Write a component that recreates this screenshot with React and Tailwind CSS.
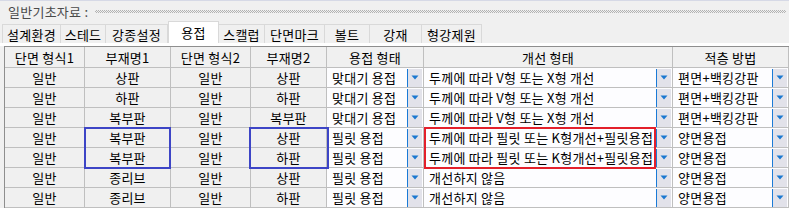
import React from 'react'

const tabs = [
  { label: '설계환경', w: 'w-[59px]' },
  { label: '스테드', w: 'w-[45px]' },
  { label: '강종설정', w: 'w-[62px]' },
  { label: '용접', w: 'w-[51px]', active: true },
  { label: '스캘럽', w: 'w-[46px]' },
  { label: '단면마크', w: 'w-[60px]' },
  { label: '볼트', w: 'w-[45px]' },
  { label: '강재', w: 'w-[52px]' },
  { label: '형강제원', w: 'w-[60px]' },
]

const headers = ['단면 형식1', '부재명1', '단면 형식2', '부재명2', '용접 형태', '개선 형태', '적층 방법']

const V_GROOVE = '두께에 따라 V형 또는 X형 개선'
const K_GROOVE = '두께에 따라 필릿 또는 K형개선+필릿용접'

const rows = [
  ['일반', '상판', '일반', '상판', '맞대기 용접', V_GROOVE, '편면+백킹강판'],
  ['일반', '하판', '일반', '하판', '맞대기 용접', V_GROOVE, '편면+백킹강판'],
  ['일반', '복부판', '일반', '복부판', '맞대기 용접', V_GROOVE, '편면+백킹강판'],
  ['일반', '복부판', '일반', '상판', '필릿 용접', K_GROOVE, '양면용접'],
  ['일반', '복부판', '일반', '하판', '필릿 용접', K_GROOVE, '양면용접'],
  ['일반', '종리브', '일반', '상판', '필릿 용접', '개선하지 않음', '양면용접'],
  ['일반', '종리브', '일반', '하판', '필릿 용접', '개선하지 않음', '양면용접'],
]

const DropButton = () => (
  <div className="w-[15px] h-[18px] mr-[1px] shrink-0 border-l border-[#1a7ad6] bg-[#e2e2ea] flex items-center justify-center">
    <svg width="8" height="5" viewBox="0 0 8 5">
      <path d="M0.5 0.5h7L4 4.5z" fill="#1b78d0" />
    </svg>
  </div>
)

const TextCell = ({ children }) => (
  <div className="h-[20px] border-r border-b border-[#bfbfbf] flex items-center justify-center bg-[#f0f0f0]">
    {children}
  </div>
)

const ComboCell = ({ children }) => (
  <div className="h-[20px] border-r border-b border-[#bfbfbf] flex items-center justify-between bg-[#fdfdff] pl-[5px] overflow-hidden">
    <span className="whitespace-nowrap">{children}</span>
    <DropButton />
  </div>
)

export default function App() {
  return (
    <div className="w-[789px] h-[208px] overflow-hidden bg-[#f0f0f0] text-[13px] tracking-[0.25px] leading-none text-black font-['Noto_Sans_CJK_KR','Noto_Sans',sans-serif]">
      <div className="h-px bg-[#d6d9e6]" />

      {/* title */}
      <div className="h-[20px] flex items-center pl-[8px]">
        <span className="w-[87px] shrink-0 text-[#4a4a4a] whitespace-nowrap">일반기초자료 :</span>
        <div className="mr-[3px] flex-1 h-[3px] bg-[repeating-conic-gradient(#b2b2b2_0_25%,transparent_0_50%)] bg-[length:2px_2px]" />
      </div>

      {/* tabs */}
      <div className="h-[22px] flex items-end pl-[2px]">
        {tabs.map((t, i) =>
          t.active ? (
            <div
              key={t.label}
              className={`${t.w} h-[22px] bg-white border-x border-t border-[#d9d9d9] flex items-center justify-center pb-[1px]`}
            >
              {t.label}
            </div>
          ) : (
            <div
              key={t.label}
              className={`${t.w} h-[19px] border-t border-r border-[#d9d9d9] flex items-center justify-center ${i === 0 ? 'border-l' : ''}`}
            >
              {t.label}
            </div>
          )
        )}
      </div>
      <div className="h-[3px] bg-white" />

      {/* grid */}
      <div className="relative ml-[4px] border-l border-t border-[#8e8e8e]">
        <div className="grid grid-cols-[80px_86px_80px_76px_97px_249px_116px]">
          {headers.map((h) => (
            <div
              key={h}
              className="h-[21px] border-r border-b border-[#bfbfbf] flex items-center justify-center bg-[#f0f0f0]"
            >
              {h}
            </div>
          ))}
          {rows.map((r, ri) => (
            <React.Fragment key={ri}>
              <TextCell>{r[0]}</TextCell>
              <TextCell>{r[1]}</TextCell>
              <TextCell>{r[2]}</TextCell>
              <TextCell>{r[3]}</TextCell>
              <ComboCell>{r[4]}</ComboCell>
              <ComboCell>{r[5]}</ComboCell>
              <ComboCell>{r[6]}</ComboCell>
            </React.Fragment>
          ))}
        </div>

        {/* selection highlights */}
        <div className="absolute left-[79px] top-[80px] w-[87px] h-[42px] border-2 border-[#3d45c6] pointer-events-none" />
        <div className="absolute left-[244px] top-[80px] w-[80px] h-[42px] border-2 border-[#3d45c6] pointer-events-none" />
        <div className="absolute left-[419px] top-[80px] w-[232px] h-[42px] border-2 border-[#e3202b] pointer-events-none" />
      </div>
    </div>
  )
}
